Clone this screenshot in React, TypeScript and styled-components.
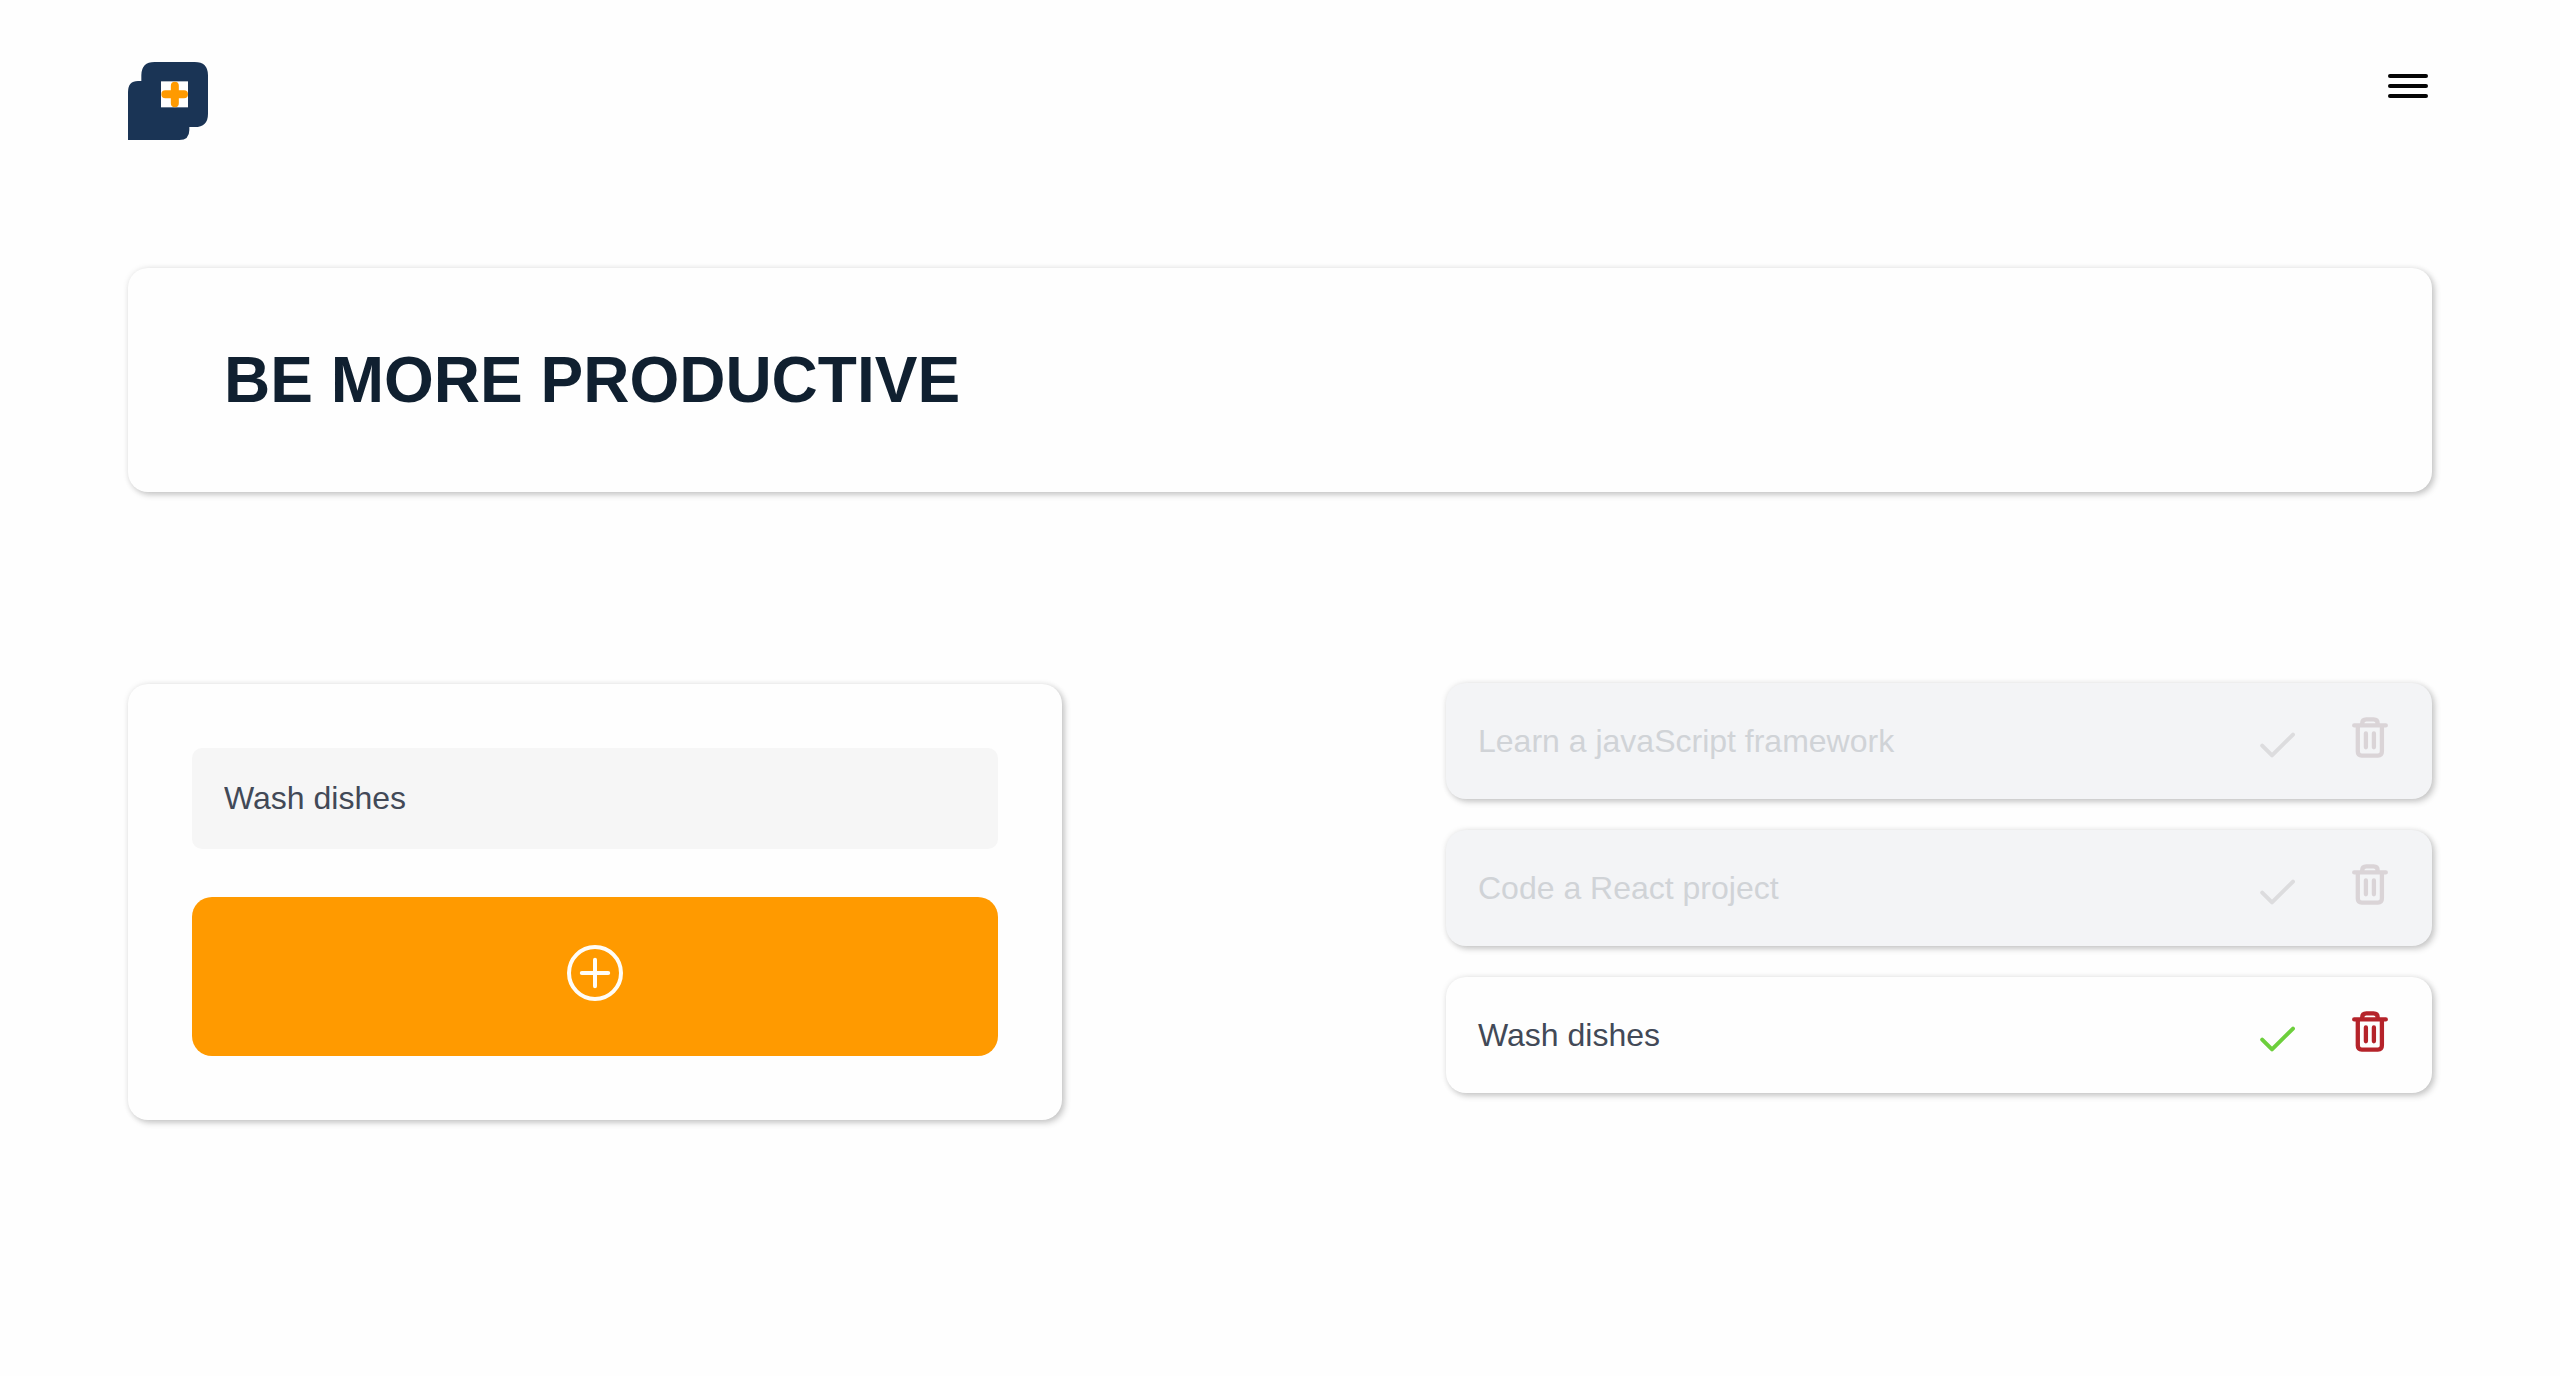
import React, { useState } from "react";
import styled, { createGlobalStyle, css } from "styled-components";

const GlobalStyle = createGlobalStyle`
  *, *::before, *::after { box-sizing: border-box; }
  html, body { margin: 0; padding: 0; background: #fefefe; }
  body, input, button { font-family: "Liberation Sans", Arial, sans-serif; }
`;

const raised = css`
  border-radius: 20px;
  box-shadow: 3px 3px 6px rgba(0, 0, 0, 0.19), 0 0 6px rgba(0, 0, 0, 0.09);
`;

const Page = styled.div`
  min-height: 1376px;
  padding: 62px 128px 0;
`;

const Header = styled.header`
  display: flex;
  justify-content: space-between;
  align-items: flex-start;
  height: 206px;
`;

const MenuButton = styled.button`
  display: flex;
  flex-direction: column;
  gap: 6px;
  width: 40px;
  margin: 12px 4px 0 0;
  padding: 0;
  border: 0;
  background: none;
`;

const MenuBar = styled.span`
  height: 4px;
  border-radius: 2px;
  background: #050505;
`;

const Banner = styled.section`
  ${raised}
  display: flex;
  align-items: center;
  height: 224px;
  padding: 0 96px;
  background: #fefefe;
`;

const Title = styled.h1`
  margin: 0;
  color: #102030;
  font-size: 64px;
  line-height: 74px;
  font-weight: 700;
  text-transform: uppercase;
`;

const Main = styled.main`
  display: flex;
  justify-content: space-between;
  align-items: flex-start;
  margin-top: 191px;
`;

const Form = styled.form`
  ${raised}
  display: flex;
  flex-direction: column;
  gap: 48px;
  width: 934px;
  height: 436px;
  margin-top: 1px;
  padding: 64px;
  background: #fefefe;
`;

const TaskInput = styled.input`
  width: 100%;
  height: 101px;
  padding: 0 32px;
  border: 0;
  border-radius: 10px;
  outline: 0;
  background: #f6f6f6;
  color: #424957;
  font-size: 32px;
`;

const AddButton = styled.button`
  display: flex;
  align-items: center;
  justify-content: center;
  height: 159px;
  padding: 0 0 7px;
  border: 0;
  border-radius: 20px;
  background: #ff9a00;
`;

const TaskList = styled.ul`
  display: flex;
  flex-direction: column;
  gap: 31px;
  width: 986px;
  margin: 0;
  padding: 0;
  list-style: none;
`;

const TaskRow = styled.li<{ $done: boolean }>`
  ${raised}
  display: flex;
  align-items: flex-start;
  height: 116px;
  padding: 0 44px 0 32px;
  background: ${(p) => (p.$done ? "#f3f4f6" : "#fefefe")};
  color: ${(p) => (p.$done ? "#d0d3d7" : "#424957")};
`;

const TaskText = styled.span`
  flex: 1;
  font-size: 32px;
  line-height: 116px;
`;

const IconButton = styled.button<{ $color: string; $top: number; $gap?: number }>`
  display: flex;
  margin: ${(p) => p.$top}px 0 0 ${(p) => p.$gap ?? 0}px;
  padding: 0;
  border: 0;
  background: none;
  color: ${(p) => p.$color};
`;

const Logo = () => (
  <svg width="80" height="78" viewBox="0 0 240 234" aria-label="Logo">
    <path
      fill="#1a3455"
      d="M0 234V90Q0 57 30 57H40V40Q40 0 80 0H200Q240 0 240 40V155Q240 195 200 195H184V204Q184 234 154 234Z"
    />
    <path fill="#fefefe" d="M99 58h81v78H99z" />
    <path fill="none" stroke="#ff9a00" strokeWidth="24" strokeLinecap="round" d="M112 97h56M140.500 71v53" />
  </svg>
);

const PlusCircle = () => (
  <svg width="56" height="56" viewBox="0 0 56 56" fill="none" stroke="#fffdf8" strokeLinecap="round">
    <circle cx="28" cy="28" r="26" strokeWidth="4" />
    <path d="M28 14.800v26.400M14.800 28h26.400" strokeWidth="4" />
  </svg>
);

const CheckIcon = () => (
  <svg width="36" height="26" viewBox="0 0 36 26" fill="none" stroke="currentColor" strokeWidth="4" strokeLinecap="round" strokeLinejoin="round">
    <path d="M2.200 13.600 12 23.300 33 2.600" />
  </svg>
);

const TrashIcon = () => (
  <svg width="36" height="41" viewBox="0 0 36 41" fill="none" stroke="currentColor" strokeWidth="4.300" strokeLinecap="round">
    <path d="M2.200 8.400H33.800M5.800 8.400V34.600Q5.800 38.600 9.800 38.600H25.900Q29.900 38.600 29.900 34.600V8.400M10.200 8V6.500Q10.200 2.300 14.400 2.300H21.500Q25.700 2.300 25.700 6.500V8M13.900 16.500V30.300M21.900 16.500V30.300" />
  </svg>
);

const tasks = [
  { text: "Learn a javaScript framework", done: true },
  { text: "Code a React project", done: true },
  { text: "Wash dishes", done: false },
];

export default function App() {
  const [draft, setDraft] = useState("Wash dishes");
  return (
    <Page>
      <GlobalStyle />
      <Header>
        <Logo />
        <MenuButton aria-label="Menu">
          <MenuBar />
          <MenuBar />
          <MenuBar />
        </MenuButton>
      </Header>
      <Banner>
        <Title>Be more productive</Title>
      </Banner>
      <Main>
        <Form onSubmit={(e) => e.preventDefault()}>
          <TaskInput value={draft} onChange={(e) => setDraft(e.target.value)} />
          <AddButton aria-label="Add task">
            <PlusCircle />
          </AddButton>
        </Form>
        <TaskList>
          {tasks.map((task) => (
            <TaskRow key={task.text} $done={task.done}>
              <TaskText>{task.text}</TaskText>
              <IconButton $color={task.done ? "#dcdcde" : "#6dcf3c"} $top={49} aria-label="Complete">
                <CheckIcon />
              </IconButton>
              <IconButton $color={task.done ? "#dad4d7" : "#b5232a"} $top={34} $gap={56} aria-label="Delete">
                <TrashIcon />
              </IconButton>
            </TaskRow>
          ))}
        </TaskList>
      </Main>
    </Page>
  );
}
